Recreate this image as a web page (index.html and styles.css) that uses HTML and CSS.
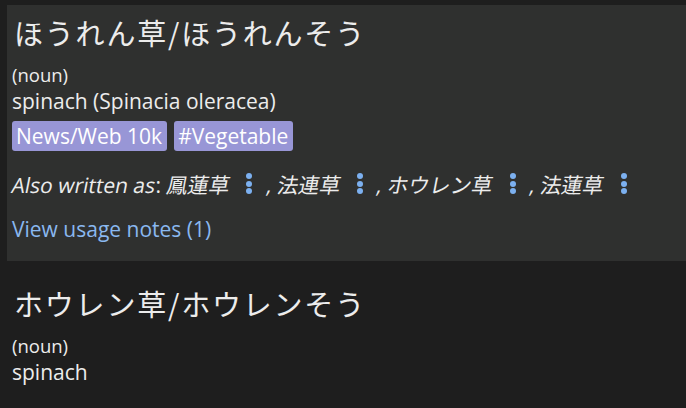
FILE: index.html
```html
<!DOCTYPE html>
<html lang="ja">
<head>
<meta charset="utf-8">
<link rel="stylesheet" href="styles.css">
</head>
<body>
<div class="entry entry-active">
  <h2 class="head">ほうれん草/ほうれんそう</h2>
  <div class="pos">(noun)</div>
  <div class="gloss">spinach (Spinacia oleracea)</div>
  <div class="tags"><span class="tag">News/Web 10k</span><span class="tag">#Vegetable</span></div>
  <div class="alt"><span class="slant">Also written as</span>: <span class="slant">鳳蓮草</span> <span class="dots"><i></i><i></i><i></i></span> <span class="slant">, 法連草</span> <span class="dots"><i></i><i></i><i></i></span> <span class="slant">, ホウレン草</span> <span class="dots"><i></i><i></i><i></i></span> <span class="slant">, 法蓮草</span> <span class="dots"><i></i><i></i><i></i></span></div>
  <a class="notes" href="#">View usage notes (1)</a>
</div>
<div class="entry entry-plain">
  <h2 class="head">ホウレン草/ホウレンそう</h2>
  <div class="pos">(noun)</div>
  <div class="gloss">spinach</div>
</div>
</body>
</html>
```
FILE: styles.css
```css
html, body { margin: 0; padding: 0; }
body {
  background: #1e1e1e;
  color: #ececec;
  font-family: "Open Sans", "Noto Sans CJK JP", sans-serif;
  padding: 5px 0 0 7px;
  height: 408px;
  box-sizing: border-box;
  overflow: hidden;
}
.entry {
  padding: 7px 5px 0 5px;
}
.entry-active {
  background: #2f302f;
  height: 256px;
  box-sizing: border-box;
}
.entry-plain {
  padding-top: 22px;
}
.head {
  margin: 0;
  font-family: "Noto Sans CJK JP", sans-serif;
  font-weight: 400;
  font-size: 29px;
  letter-spacing: 1.8px;
  line-height: 40px;
  padding-left: 2px;
}
.pos {
  margin-top: 12px;
  font-size: 18.5px;
  line-height: 22px;
}
.gloss {
  margin-top: 1px;
  font-size: 21px;
  line-height: 28px;
}
.tags {
  display: flex;
  gap: 7px;
  margin-top: 6px;
}
.tag {
  background: #9896d6;
  color: #ffffff;
  font-size: 21px;
  line-height: 30px;
  padding: 0 5px 0 4px;
  border-radius: 3px;
}
.alt {
  margin-top: 19px;
  font-size: 21px;
  line-height: 30px;
  height: 30px;
  white-space: nowrap;
}
.slant {
  display: inline-block;
  transform: skewX(-11deg);
}
.dots {
  display: inline-block;
  vertical-align: -1px;
  margin: 0 9px 0 11px;
  line-height: 0;
}
.dots i {
  display: block;
  width: 6px;
  height: 6px;
  border-radius: 50%;
  background: #7cb0f0;
  margin-top: 1.5px;
}
.dots i:first-child {
  margin-top: 0;
}
.notes {
  display: block;
  margin-top: 15px;
  color: #8ab8f0;
  text-decoration: none;
  font-size: 21px;
  line-height: 28px;
}
```
